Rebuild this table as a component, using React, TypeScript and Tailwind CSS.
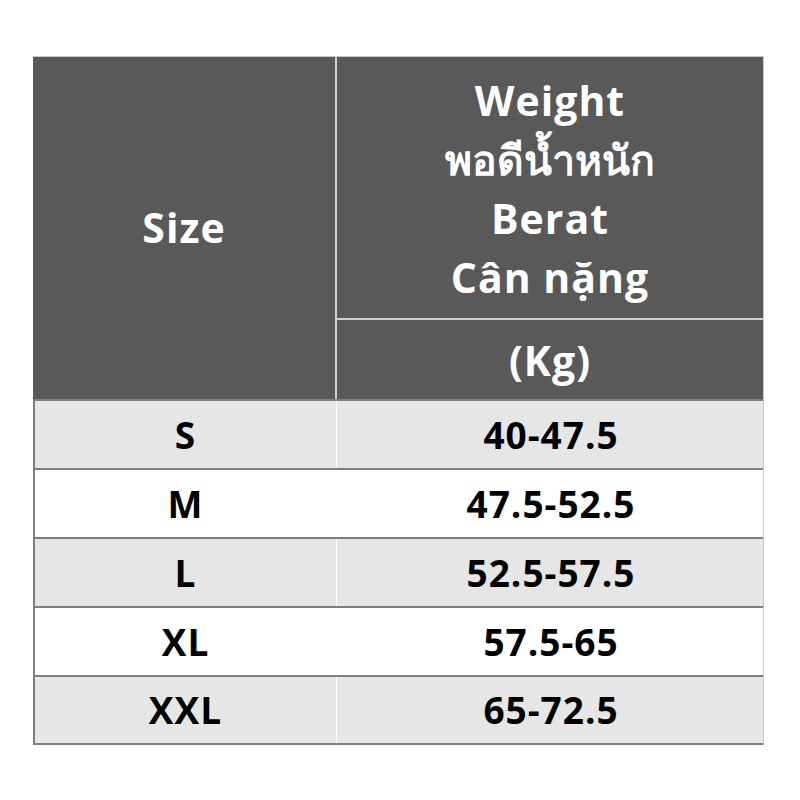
const rows = [
  { size: "S", weight: "40-47.5", shade: true, h: "h-[69px]" },
  { size: "M", weight: "47.5-52.5", shade: false, h: "h-[69px]" },
  { size: "L", weight: "52.5-57.5", shade: true, h: "h-[69px]" },
  { size: "XL", weight: "57.5-65", shade: false, h: "h-[69px]" },
  { size: "XXL", weight: "65-72.5", shade: true, h: "h-[68px]" },
];

export default function App() {
  return (
    <div
      className="w-[800px] h-[800px] bg-white pt-[56px] pl-[33px]"
      style={{ fontFamily: '"Open Sans", "Noto Sans", sans-serif' }}
    >
      <div className="w-[731px] border-t border-r border-[#c8c8c8]">
        {/* header */}
        <div className="grid grid-cols-[304px_426px] h-[342px] bg-[#595959] text-white font-bold tracking-[1px]">
          <div className="flex items-center justify-center text-[41px] border-r-2 border-[#d0d0d0]">
            Size
          </div>
          <div className="flex flex-col">
            <div className="h-[263px] flex flex-col items-center justify-center text-[41px] leading-[59px] border-b-2 border-[#d0d0d0] pt-[3px]">
              <span>Weight</span>
              <span className="tracking-normal">พอดีน้ำหนัก</span>
              <span>Berat</span>
              <span>Cân nặng</span>
            </div>
            <div className="flex-1 flex items-center justify-center text-[41px] pt-[2px]">
              (Kg)
            </div>
          </div>
        </div>

        {/* body */}
        <div className="border-l-2 border-[#7f7f7f]">
          {rows.map((r) => (
            <div
              key={r.size}
              className={`grid grid-cols-[302px_428px] ${r.h} border-t-2 border-[#7f7f7f] text-black font-bold text-[37px] tracking-[1px] ${
                r.shade ? "bg-[#e6e6e6]" : "bg-white"
              }`}
            >
              <div className="flex items-center justify-center border-r border-white">
                {r.size}
              </div>
              <div className="flex items-center justify-center">{r.weight}</div>
            </div>
          ))}
          <div className="h-[2px] bg-[#7f7f7f]" />
        </div>
      </div>
    </div>
  );
}
